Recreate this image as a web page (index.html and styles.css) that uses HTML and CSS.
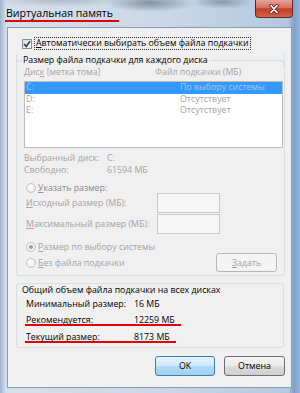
FILE: index.html
```html
<!DOCTYPE html>
<html lang="ru">
<head>
    <meta charset="UTF-8">
    <meta name="viewport" content="width=device-width, initial-scale=1.0">
    <title>Виртуальная память</title>
    <link rel="stylesheet" href="styles.css">
</head>
<body>
    <div class="window">
        <div class="titlebar">
            <span class="title"><span class="title-mark">Виртуальная память</span></span>
            <button class="close">
                <svg width="12" height="10" viewBox="0 0 12 10">
                    <path d="M3 1.5 L9 8.5 M9 1.5 L3 8.5" stroke="#5a1a12" stroke-width="3.4" stroke-linecap="round"/>
                    <path d="M3 1.5 L9 8.5 M9 1.5 L3 8.5" stroke="#ffffff" stroke-width="1.8" stroke-linecap="round"/>
                </svg>
            </button>
        </div>

        <div class="client">
            <div class="auto">
                <span class="check">
                    <svg width="8" height="8" viewBox="0 0 8 8">
                        <path d="M1 4 L3.2 6.4 L7 1.2" fill="none" stroke="#2b3f6b" stroke-width="1.6"/>
                    </svg>
                </span>
                <span class="focus"><u>А</u>втоматически выбирать объем файла подкачки</span>
            </div>

            <div class="group">
                <div class="group-head">Размер файла подкачки для каждого диска</div>
                <div class="cols dim">
                    <span class="col-disk">Дис<u>к</u> [метка тома]</span>
                    <span>Файл подкачки (МБ)</span>
                </div>
                <div class="list">
                    <div class="item selected"><span class="item-disk">C:</span><span>По выбору системы</span></div>
                    <div class="item"><span class="item-disk">D:</span><span>Отсутствует</span></div>
                    <div class="item"><span class="item-disk">E:</span><span>Отсутствует</span></div>
                </div>

                <div class="info dim first"><span class="info-key">Выбранный диск:</span><span>C:</span></div>
                <div class="info dim"><span class="info-key">Свободно:</span><span>61594 МБ</span></div>

                <div class="option first"><span class="radio"></span><span class="option-text"><u>У</u>казать размер:</span></div>
                <div class="size dim"><span class="size-key"><u>И</u>сходный размер (МБ):</span><span class="field"></span></div>
                <div class="size dim second"><span class="size-key"><u>М</u>аксимальный размер (МБ):</span><span class="field"></span></div>

                <div class="option system"><span class="radio on"></span><span class="dim"><u>Р</u>азмер по выбору системы</span></div>
                <div class="option last">
                    <span class="option-left"><span class="radio"></span><span class="dim"><u>Б</u>ез файла подкачки</span></span>
                    <button class="btn set"><u>З</u>адать</button>
                </div>
            </div>

            <div class="totals">
                <div class="totals-head">Общий объем файла подкачки на всех дисках</div>
                <div class="trow first"><span class="tkey">Минимальный размер:</span><span>16 МБ</span></div>
                <div class="trow second"><span class="mark"><span class="tkey">Рекомендуется:</span><span>12259 МБ</span></span></div>
                <div class="trow third"><span class="mark"><span class="tkey">Текущий размер:</span><span>8173 МБ</span></span></div>
            </div>

            <div class="actions">
                <button class="btn default">OK</button>
                <button class="btn">Отмена</button>
            </div>
        </div>
    </div>
</body>
</html>
```

FILE: styles.css
```css
body {
    margin: 0;
    font-family: "Open Sans", "Noto Sans", sans-serif;
    font-size: 8.8px;
    color: #1a1a1a;
    white-space: nowrap;
}

.window {
    width: 300px;
    height: 393px;
    display: flex;
    flex-direction: column;
    overflow: hidden;
    background:
        radial-gradient(ellipse 45px 9px at 150px 3px, rgba(70, 85, 105, 0.55), transparent),
        radial-gradient(ellipse 30px 7px at 222px 2px, rgba(70, 85, 105, 0.45), transparent),
        radial-gradient(ellipse 70px 7px at 60px 0, rgba(140, 155, 175, 0.5), transparent),
        linear-gradient(to right, #9fb4cc 0, #d5dfeb 2%, #cdd9e6 50%, #b4c8df 96%, #7fa0cb 98%, #9bb7d9 100%);
}

.titlebar {
    height: 27px;
    flex-shrink: 0;
    display: flex;
    justify-content: space-between;
    align-items: flex-start;
}

.title {
    padding: 6px 0 0 5px;
    font-size: 10.6px;
    color: #000;
}

.title-mark {
    display: inline-block;
    line-height: 13px;
    padding: 0 6px 0 1px;
    border-bottom: 2px solid #e00000;
}

.close {
    width: 38px;
    height: 18px;
    margin-right: 7px;
    padding: 0;
    border: 1px solid #5c2a22;
    border-top: none;
    border-radius: 0 0 4px 4px;
    background: linear-gradient(#e8a496, #d7705e 45%, #c23a27 52%, #d4634b);
    display: flex;
    align-items: center;
    justify-content: center;
}

.client {
    flex: 1;
    margin: 0 8px 5px 7px;
    background: #f0f0f0;
    border: 1px solid #8b9db4;
    display: flex;
    flex-direction: column;
}

u {
    text-decoration-thickness: 1px;
    text-underline-offset: 1px;
}

.dim {
    color: #a4a4a4;
}

/* checkbox row */
.auto {
    margin: 9px 0 0 14px;
    height: 13px;
    display: flex;
    align-items: center;
}

.check {
    width: 10px;
    height: 10px;
    box-sizing: border-box;
    border: 1px solid #8e8f8f;
    background: linear-gradient(135deg, #dcdcdc, #fafafa);
    display: flex;
    align-items: center;
    justify-content: center;
}

.focus {
    margin-left: 2px;
    padding: 0 1px;
    line-height: 11px;
    border: 1px dotted #333;
    color: #000;
}

/* page file group */
.group {
    margin: 4px 0 0 8px;
    width: 269px;
    box-sizing: border-box;
    border: 1px solid #d5dfe5;
    border-top: none;
    border-radius: 0 0 3px 3px;
    padding: 0 7px 3px 7px;
}

.group-head {
    display: flex;
    align-items: center;
    height: 12px;
    margin: 0 -7px 0 -8px;
    color: #000;
}

.group-head::before {
    content: "";
    width: 5px;
    align-self: stretch;
    margin-right: 1px;
    border-top: 1px solid #d5dfe5;
    border-left: 1px solid #d5dfe5;
    border-radius: 3px 0 0 0;
    margin-top: 6px;
}

.group-head::after {
    content: "";
    flex: 1;
    align-self: stretch;
    margin-left: 2px;
    border-top: 1px solid #d5dfe5;
    border-right: 1px solid #d5dfe5;
    border-radius: 0 3px 0 0;
    margin-top: 6px;
}

.cols {
    display: flex;
    height: 12px;
    line-height: 12px;
}

.col-disk {
    width: 131px;
}

.list {
    margin-top: 3px;
    width: 259px;
    height: 67px;
    box-sizing: border-box;
    border: 1px solid #bdbdbd;
    background: #fff;
}

.item {
    display: flex;
    height: 11.5px;
    line-height: 11.5px;
    padding-left: 1px;
    color: #a4a4a4;
}

.item-disk {
    width: 154px;
}

.item.selected {
    background: #3399ff;
    color: #a9c6ea;
}

.info {
    display: flex;
    height: 12px;
    line-height: 12px;
}

.info.first {
    margin-top: 4px;
}

.info-key {
    width: 83px;
}

.option {
    display: flex;
    align-items: center;
    height: 11px;
    margin-left: 2px;
}

.option.first {
    margin-top: 6px;
}

.option-text {
    color: #8c8c8c;
}

.option.system {
    margin-top: 7px;
    height: 12px;
}

.option.last {
    height: 19px;
    justify-content: space-between;
}

.option-left {
    display: flex;
    align-items: center;
}

.radio {
    width: 10px;
    height: 10px;
    box-sizing: border-box;
    border: 1px solid #c4c4c4;
    border-radius: 50%;
    background: radial-gradient(circle at 40% 35%, #ffffff, #e6e6e6);
    margin-right: 2px;
    display: flex;
    align-items: center;
    justify-content: center;
}

.radio.on::after {
    content: "";
    width: 4px;
    height: 4px;
    border-radius: 50%;
    background: #9a9a9a;
}

.size {
    display: flex;
    align-items: center;
    height: 20px;
    margin-left: 2px;
}

.size.second {
    margin-top: 1px;
}

.size-key {
    width: 131px;
}

.field {
    width: 63px;
    height: 20px;
    box-sizing: border-box;
    border: 1px solid #cacaca;
    background: #f6f6f6;
}

.btn {
    width: 60px;
    height: 20px;
    padding: 0;
    font-family: inherit;
    font-size: 8.8px;
    color: #000;
    border: 1px solid #707070;
    border-radius: 3px;
    background: linear-gradient(#f3f3f3, #ebebeb 50%, #dddddd 50%, #cfcfcf);
}

.btn.set {
    width: 61px;
    height: 19px;
    color: #a4a4a4;
    border-color: #b5b8bb;
    background: #f4f4f4;
}

.btn.default {
    border-color: #3c7fb1;
    background: linear-gradient(#e5f4fc, #cfeafa 50%, #b3dcf4 50%, #9fd2ef);
}

/* totals group */
.totals {
    margin: 7px 0 0 8px;
    width: 268px;
    box-sizing: border-box;
    border: 1px solid #d5dfe5;
    border-radius: 3px;
    padding: 0 5px 4px 5px;
    color: #000;
}

.totals-head {
    line-height: 12px;
}

.trow {
    display: flex;
    height: 12px;
    line-height: 12px;
    margin-left: 4px;
}

.trow.first {
    margin-top: 2px;
}

.trow.second {
    margin-top: 4px;
}

.trow.third {
    margin-top: 5px;
}

.tkey {
    width: 108px;
}

.mark {
    display: flex;
    margin-left: -1px;
    padding: 0 6px 0 1px;
    border-bottom: 2px solid #e00000;
}

.actions {
    display: flex;
    justify-content: flex-end;
    gap: 9px;
    margin-top: 8px;
    padding-right: 6px;
}

.actions .btn:last-child {
    width: 61px;
}
```
